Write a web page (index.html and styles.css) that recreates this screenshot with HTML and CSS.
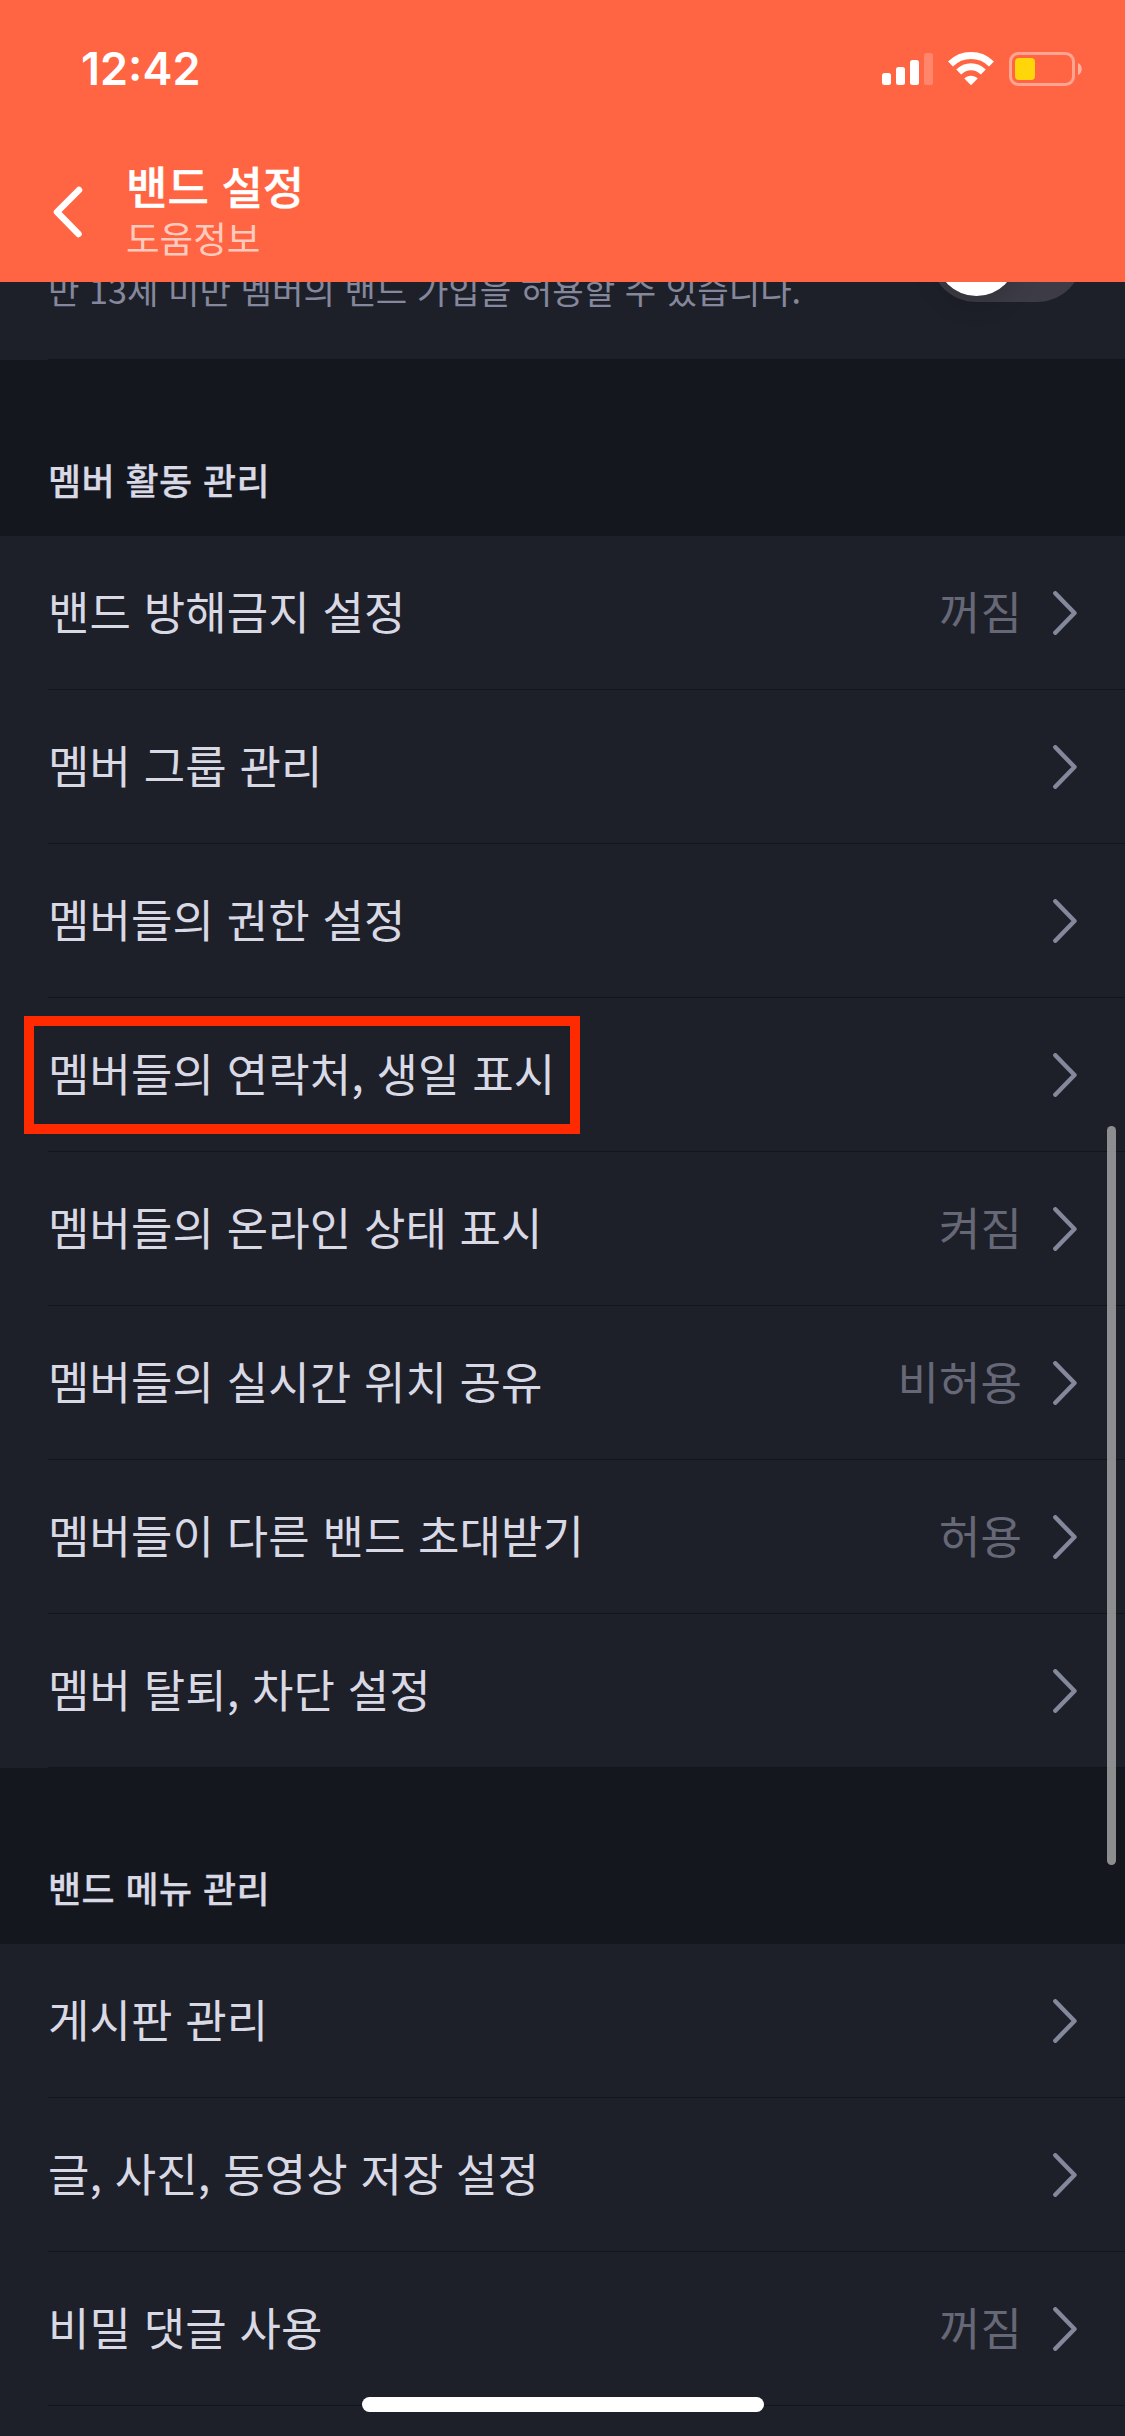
FILE: index.html
```
<!DOCTYPE html>
<html lang="ko">
<head>
<meta charset="utf-8">
<title>밴드 설정</title>
<link rel="stylesheet" href="styles.css">
</head>
<body>
<svg class="defs" width="0" height="0" aria-hidden="true">
  <symbol id="chevron" viewBox="0 0 24 44"><path d="M2.3 2.3 21.5 22 2.3 41.7" fill="none" stroke="currentColor" stroke-width="4.4" stroke-linecap="round" stroke-linejoin="round"/></symbol>
</svg>
<div class="screen">
  <header class="header">
    <div class="status">
      <span class="time">12:42</span>
      <svg class="status-icons" width="202" height="36" viewBox="0 0 202 36" fill="#fff">
        <rect x="0" y="22" width="9" height="12" rx="2.5"/>
        <rect x="14" y="16" width="9" height="18" rx="2.5"/>
        <rect x="28" y="9" width="9" height="25" rx="2.5"/>
        <rect x="42" y="2" width="9" height="32" rx="2.5" opacity=".22"/>
        <g fill="none" stroke="#fff">
          <path d="M68.5 13C80 1.700 98 1.700 109.500 13" stroke-width="7"/>
          <path d="M76.700 21C84 14 94 14 101.300 21" stroke-width="7"/>
        </g>
        <path d="M82.300 27.400C86 24 92 24 95.700 27.400L89 34.200Z"/>
        <rect x="128.500" y="2.500" width="63" height="31" rx="8" fill="none" stroke="#fff" stroke-opacity=".42" stroke-width="3"/>
        <path d="M196 12c5 2 5 10 0 12z" opacity=".5"/>
        <rect x="133" y="7" width="20" height="22" rx="4" fill="#ffd60a"/>
      </svg>
    </div>
    <div class="nav">
      <svg class="back" width="30" height="52" viewBox="0 0 30 52"><path d="M26 4 4 26 25.500 48" fill="none" stroke="#fff" stroke-width="6.500" stroke-linecap="round" stroke-linejoin="round"/></svg>
      <div class="titles">
        <h1 class="title">밴드 설정</h1>
        <p class="subtitle">도움정보</p>
      </div>
    </div>
  </header>
  <main class="content">
    <div class="partial-row">
      <p class="hint">만 13세 미만 멤버의 밴드 가입을 허용할 수 있습니다.</p>
      <span class="toggle"><span class="knob"></span></span>
    </div>
    <h2 class="section-title">멤버 활동 관리</h2>
    <ul class="list">
      <li class="row"><span class="label">밴드 방해금지 설정</span><span class="value">꺼짐</span><svg class="chevron"><use href="#chevron"/></svg></li>
      <li class="row"><span class="label">멤버 그룹 관리</span><svg class="chevron"><use href="#chevron"/></svg></li>
      <li class="row"><span class="label">멤버들의 권한 설정</span><svg class="chevron"><use href="#chevron"/></svg></li>
      <li class="row"><span class="label">멤버들의 연락처, 생일 표시</span><svg class="chevron"><use href="#chevron"/></svg><span class="highlight"></span></li>
      <li class="row"><span class="label">멤버들의 온라인 상태 표시</span><span class="value">켜짐</span><svg class="chevron"><use href="#chevron"/></svg></li>
      <li class="row"><span class="label">멤버들의 실시간 위치 공유</span><span class="value">비허용</span><svg class="chevron"><use href="#chevron"/></svg></li>
      <li class="row"><span class="label">멤버들이 다른 밴드 초대받기</span><span class="value">허용</span><svg class="chevron"><use href="#chevron"/></svg></li>
      <li class="row"><span class="label">멤버 탈퇴, 차단 설정</span><svg class="chevron"><use href="#chevron"/></svg></li>
    </ul>
    <h2 class="section-title">밴드 메뉴 관리</h2>
    <ul class="list">
      <li class="row"><span class="label">게시판 관리</span><svg class="chevron"><use href="#chevron"/></svg></li>
      <li class="row"><span class="label">글, 사진, 동영상 저장 설정</span><svg class="chevron"><use href="#chevron"/></svg></li>
      <li class="row"><span class="label">비밀 댓글 사용</span><span class="value">꺼짐</span><svg class="chevron"><use href="#chevron"/></svg></li>
    </ul>
  </main>
  <div class="scrollbar"></div>
  <div class="home-indicator"></div>
</div>
</body>
</html>
```
FILE: styles.css
```
* { box-sizing: border-box; margin: 0; padding: 0; }
body { background: #1e2029; font-family: "Noto Sans CJK KR", sans-serif; }
.defs { position: absolute; }
.screen { position: relative; width: 1125px; height: 2436px; overflow: hidden; display: flex; flex-direction: column; background: #1e2029; }

.header { height: 282px; flex: none; background: #ff6542; color: #fff; }
.status { height: 138px; padding: 0 41px 0 81px; display: flex; justify-content: space-between; align-items: center; }
.time { font: 600 45px/54px "Inter", sans-serif; }
.status-icons { flex: none; }
.nav { display: flex; padding-left: 53px; }
.back { margin-top: 48px; }
.titles { margin-left: 43px; padding-top: 18px; }
.title { font-size: 45px; line-height: 60px; font-weight: 500; -webkit-text-stroke: .4px #fff; white-space: pre; }
.subtitle { font-size: 36.5px; line-height: 44px; font-weight: 400; color: rgba(255, 255, 255, .68); white-space: pre; }

.content { flex: none; }
.partial-row { height: 78px; padding: 0 42px 0 48px; display: flex; align-items: flex-start; justify-content: space-between; overflow: hidden; position: relative; }
.partial-row::after, .row::after { content: ""; position: absolute; left: 48px; right: 0; bottom: 0; height: 1px; background: #13151c; }
.hint { margin-top: -18px; font-size: 34.2px; line-height: 50px; color: #85879c; white-space: pre; }
.toggle { width: 153px; height: 93px; margin-top: -73px; border-radius: 47px; padding: 6px; background: #3d3c46; }
.knob { display: block; width: 81px; height: 81px; border-radius: 50%; background: #fff; box-shadow: 0 9px 24px rgba(0, 0, 0, .15); }

.section-title { height: 176px; padding: 94px 48px 0; background: #14171e; font-size: 36px; line-height: 50px; font-weight: 500; letter-spacing: .4px; -webkit-text-stroke: .25px #d9d9e5; color: #d9d9e5; white-space: pre; }
.list { list-style: none; }
.row { position: relative; height: 154px; padding: 0 48px; display: flex; align-items: center; }
.label, .value { margin-top: -4px; font-size: 45px; line-height: 60px; letter-spacing: .1px; white-space: pre; }
.label { flex: 1; color: #d9d9e5; }
.value { margin-right: 31px; color: #666878; }
.chevron { width: 24px; height: 44px; flex: none; color: #84889c; }
.highlight { position: absolute; left: 24px; top: 18px; width: 556px; height: 118px; border: 10px solid #ff2a00; }

.scrollbar { position: absolute; left: 1107px; top: 1126px; width: 9px; height: 739px; border-radius: 5px; background: rgba(158, 158, 158, .87); }
.home-indicator { position: absolute; left: 362px; top: 2397px; width: 402px; height: 15px; border-radius: 8px; background: #fff; }
```
